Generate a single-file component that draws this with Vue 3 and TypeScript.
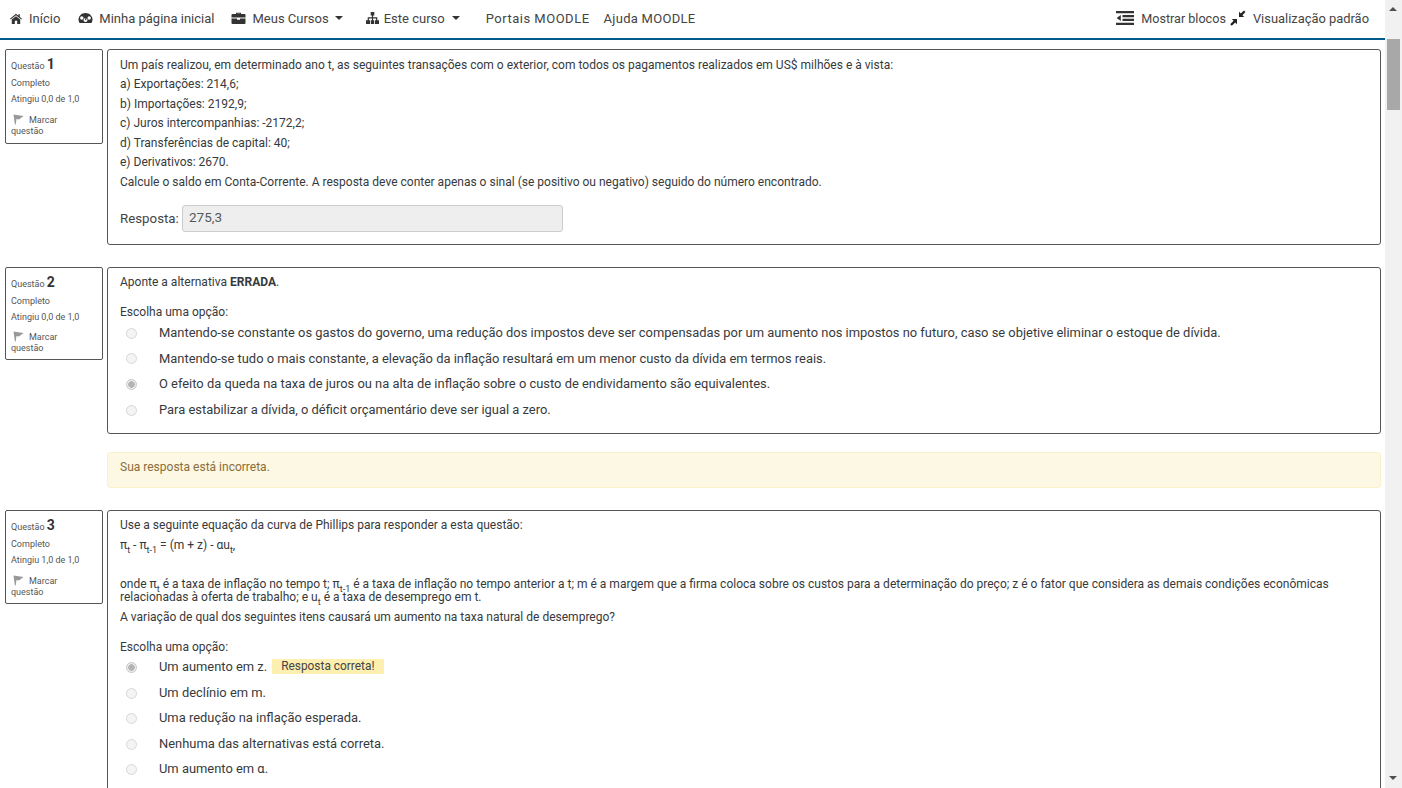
<script setup lang="ts">
interface Opt { text: string; checked?: boolean; tag?: string }
const q1Lines: string[] = [
  'Um país realizou, em determinado ano t, as seguintes transações com o exterior, com todos os pagamentos realizados em US$ milhões e à vista:',
  'a) Exportações: 214,6;',
  'b) Importações: 2192,9;',
  'c) Juros intercompanhias: -2172,2;',
  'd) Transferências de capital: 40;',
  'e) Derivativos: 2670.',
  'Calcule o saldo em Conta-Corrente. A resposta deve conter apenas o sinal (se positivo ou negativo) seguido do número encontrado.'
]
const q2Opts: Opt[] = [
  { text: 'Mantendo-se constante os gastos do governo, uma redução dos impostos deve ser compensadas por um aumento nos impostos no futuro, caso se objetive eliminar o estoque de dívida.' },
  { text: 'Mantendo-se tudo o mais constante, a elevação da inflação resultará em um menor custo da dívida em termos reais.' },
  { text: 'O efeito da queda na taxa de juros ou na alta de inflação sobre o custo de endividamento são equivalentes.', checked: true },
  { text: 'Para estabilizar a dívida, o déficit orçamentário deve ser igual a zero.' }
]
const q3Opts: Opt[] = [
  { text: 'Um aumento em z.', checked: true, tag: 'Resposta correta!' },
  { text: 'Um declínio em m.' },
  { text: 'Uma redução na inflação esperada.' },
  { text: 'Nenhuma das alternativas está correta.' },
  { text: 'Um aumento em α.' }
]
const infos = [
  { n: 1, grade: 'Atingiu 0,0 de 1,0' },
  { n: 2, grade: 'Atingiu 0,0 de 1,0' },
  { n: 3, grade: 'Atingiu 1,0 de 1,0' }
]
</script>

<template>
  <div class="window">
    <div class="page">
      <header class="nav">
        <div class="nav-left">
          <a class="item it-home">
            <svg class="ic" width="12" height="11" viewBox="0 0 12 11"><path d="M6 .8 0 5.800l.7.8L6 2.300l5.300 4.300.7-.8L9.800 4V1.200H8.400v1.600ZM6 3.200 1.800 6.600V11h3V7.800h2.400V11h3V6.600Z" fill="#333"/></svg>
            <span>Início</span>
          </a>
          <a class="item it-dash">
            <svg class="ic" width="15" height="12" viewBox="0 0 15 12"><path d="M7.500 1C3.600 1 .5 3.900.5 7.600c0 1.300.4 2.400 1 3.400h12c.6-1 1-2.100 1-3.400C14.500 3.900 11.400 1 7.500 1Z" fill="#333"/><circle cx="3.800" cy="6" r="1.700" fill="#fff"/><circle cx="11.200" cy="6" r="1.700" fill="#fff"/><circle cx="7.500" cy="8" r="2" fill="#fff"/><path d="M7.500 8 9 3" stroke="#333" stroke-width="1.200"/></svg>
            <span>Minha página inicial</span>
          </a>
          <a class="item it-courses">
            <svg class="ic" width="15" height="12" viewBox="0 0 14 12"><path d="M4.500 2V.8h5V2H13a1 1 0 0 1 1 1v2.600H0V3a1 1 0 0 1 1-1Zm1.200 0h2.600v-.2H5.700ZM0 6.500h5.500v1.300h3V6.500H14V11a1 1 0 0 1-1 1H1a1 1 0 0 1-1-1Z" fill="#333"/></svg>
            <span>Meus Cursos</span><i class="caret"></i>
          </a>
          <a class="item it-course">
            <svg class="ic" width="13" height="12" viewBox="0 0 13 12"><path d="M4.700 0h3.600v3.400H7.100v1.800h4.200v3h1.700V12H9V8.200h1.100V6.400H7.100v1.800h1.100V12H4.800V8.200h1.100V6.400H2.900v1.800H4V12H0V8.200h1.700v-3h4.200V3.400H4.700Z" fill="#333"/></svg>
            <span>Este curso</span><i class="caret"></i>
          </a>
          <a class="item it-plain">Portais MOODLE</a>
          <a class="item it-plain2">Ajuda MOODLE</a>
        </div>
        <div class="nav-right">
          <a class="item it-blocks">
            <svg class="ic" width="18" height="14" viewBox="0 0 18 14"><path d="M0 0h18v2.200H0ZM6.500 4h11.500v2.200H6.500ZM6.500 7.800h11.500V10H6.500ZM0 11.800h18V14H0ZM4.800 4v6L.6 7Z" fill="#333"/></svg>
            <span>Mostrar blocos</span>
          </a>
          <a class="item it-view">
            <svg class="ic" width="16" height="16" viewBox="0 0 16 16"><path d="M9 7V1.800l1.800 1.800L14 .6l1.400 1.400-3 3.200L14.200 7ZM7 9v5.200l-1.800-1.800L1.800 15.800.2 14.200l3.400-3.400L1.800 9Z" fill="#222"/></svg>
            <span>Visualização padrão</span>
          </a>
        </div>
      </header>

      <main class="content">
        <section class="question">
          <aside class="info">
            <div class="q-no">Questão <b>{{ infos[0].n }}</b></div>
            <div class="state">Completo</div>
            <div class="grade">{{ infos[0].grade }}</div>
            <div class="flag">
              <svg class="flag-ic" width="11" height="11" viewBox="0 0 11 11"><path d="M.5.500 10.500 2 6 5.500 3.500 5l-.8 5.500h-.8Z" fill="#999"/></svg>
              <span class="flag-t">Marcar</span><br>questão
            </div>
          </aside>
          <div class="card card-q1">
            <p v-for="l in q1Lines" :key="l" class="line">{{ l }}</p>
            <div class="answer">
              <label>Resposta:</label>
              <div class="input">275,3</div>
            </div>
          </div>
        </section>

        <section class="question q2">
          <aside class="info info2">
            <div class="q-no">Questão <b>{{ infos[1].n }}</b></div>
            <div class="state">Completo</div>
            <div class="grade">{{ infos[1].grade }}</div>
            <div class="flag">
              <svg class="flag-ic" width="11" height="11" viewBox="0 0 11 11"><path d="M.5.500 10.500 2 6 5.500 3.500 5l-.8 5.500h-.8Z" fill="#999"/></svg>
              <span class="flag-t">Marcar</span><br>questão
            </div>
          </aside>
          <div class="col">
            <div class="card card-q2">
              <p class="line">Aponte a alternativa <b>ERRADA</b>.</p>
              <p class="line choose">Escolha uma opção:</p>
              <div v-for="o in q2Opts" :key="o.text" class="opt">
                <i class="radio" :class="{ on: o.checked }"></i>
                <span>{{ o.text }}</span>
              </div>
            </div>
            <div class="feedback">Sua resposta está incorreta.</div>
          </div>
        </section>

        <section class="question q3">
          <aside class="info info3">
            <div class="q-no">Questão <b>{{ infos[2].n }}</b></div>
            <div class="state">Completo</div>
            <div class="grade">{{ infos[2].grade }}</div>
            <div class="flag">
              <svg class="flag-ic" width="11" height="11" viewBox="0 0 11 11"><path d="M.5.500 10.500 2 6 5.500 3.500 5l-.8 5.500h-.8Z" fill="#999"/></svg>
              <span class="flag-t">Marcar</span><br>questão
            </div>
          </aside>
          <div class="card card-q3">
            <p class="line">Use a seguinte equação da curva de Phillips para responder a esta questão:</p>
            <p class="line formula">π<sub>t</sub> - π<sub>t-1</sub> = (m + z) - αu<sub>t</sub>,</p>
            <p class="para">onde π<sub>t</sub> é a taxa de inflação no tempo t; π<sub>t-1</sub> é a taxa de inflação no tempo anterior a t; m é a margem que a firma coloca sobre os custos para a determinação do preço; z é o fator que considera as demais condições econômicas relacionadas à oferta de trabalho; e u<sub>t</sub> é a taxa de desemprego em t.</p>
            <p class="line after">A variação de qual dos seguintes itens causará um aumento na taxa natural de desemprego?</p>
            <p class="line choose">Escolha uma opção:</p>
            <div v-for="o in q3Opts" :key="o.text" class="opt">
              <i class="radio" :class="{ on: o.checked }"></i>
              <span>{{ o.text }}</span>
              <span v-if="o.tag" class="tag">{{ o.tag }}</span>
            </div>
          </div>
        </section>
      </main>
    </div>

    <div class="scrollbar">
      <i class="arrow up"></i>
      <div class="thumb"></div>
      <i class="arrow down"></i>
    </div>
  </div>
</template>

<style>
html, body { margin: 0; overflow: hidden; background: #fff; }
</style>

<style scoped>
.window { display: flex; width: 1402px; height: 788px; overflow: hidden; background: #fff; font-family: Roboto, "Liberation Sans", sans-serif; color: #373a3c; font-size: 12.030px; }
.page { width: 1385px; flex: none; overflow: hidden; }
.nav { height: 38px; border-bottom: 2px solid #005a8c; display: flex; justify-content: space-between; align-items: center; box-sizing: content-box; font-size: 13px; color: #444; }
.nav-left, .nav-right { display: flex; align-items: center; margin-top: -2px; }
.nav-right { padding-right: 16px; }
.item { display: flex; align-items: center; white-space: nowrap; }
.ic { flex: none; }
.it-home { margin-left: 10px; gap: 7px; }
.it-dash { margin-left: 18px; gap: 6px; }
.it-courses { margin-left: 17px; gap: 6px; }
.it-course { margin-left: 23px; gap: 5px; }
.it-plain { margin-left: 26px; letter-spacing: .5px; }
.it-plain2 { margin-left: 14px; letter-spacing: .28px; }
.it-blocks { gap: 7px; font-size: 12.600px; }
.it-view { margin-left: 4px; gap: 7px; font-size: 12.900px; }
.caret { width: 0; height: 0; border: 4px solid transparent; border-top-color: #333; border-bottom: 0; }
.it-course .caret { margin-left: 2px; }
.content { padding: 9px 4px 0 5px; }
.question { display: flex; align-items: flex-start; gap: 4px; }
.q2 { margin-top: 22px; }
.q3 { margin-top: 22px; }
.info { width: 98px; height: 95px; flex: none; box-sizing: border-box; border: 1px solid #555; border-radius: 2px; padding: 6px 5px 0 5px; font-size: 9px; color: #555; }
.info2 { height: 93px; }
.info3 { height: 94px; }
.q-no { height: 17px; line-height: 17px; }
.q-no b { font-size: 14px; font-weight: 700; color: #333; }
.state { margin-top: 4px; line-height: 13px; }
.grade { margin-top: 3px; line-height: 13px; }
.flag { margin-top: 8px; line-height: 11px; }
.info2 .flag { margin-top: 7px; }
.flag-ic { vertical-align: -2px; margin: 0 5px 0 2px; }
.col { flex: 1; min-width: 0; }
.card { flex: 1; box-sizing: border-box; border: 1px solid #555; border-radius: 3px; padding: 5.300px 12px 0; }
p { margin: 0; }
.line { line-height: 19.500px; }
.card-q1 { height: 196px; padding-top: 5.600px; }
.answer { display: flex; align-items: center; margin-top: 12.700px; font-size: 13.300px; }
.answer label { width: 62px; color: #444; }
.input { width: 381px; height: 27px; box-sizing: border-box; border: 1px solid #ccc; border-radius: 3px; background: #eee; padding: 0 6px; line-height: 23px; font-size: 13.500px; color: #55595c; }
.card-q2 { height: 167px; }
.choose { margin-top: 10px; }
.opt { display: flex; align-items: center; height: 25.600px; font-size: 12.910px; margin-top: -2.500px; margin-bottom: 2.500px; }
.radio { width: 11px; height: 11px; box-sizing: border-box; border-radius: 50%; border: 1px solid #d8d8d8; background: #f4f4f4; margin: 1.500px 22px 0 6px; flex: none; position: relative; }
.card-q3 .radio { margin-top: 2px; }
.radio.on { border-color: #c8c8c8; background: radial-gradient(circle, #b4b4b4 0 3px, #ececec 3.500px); }
.feedback { margin-top: 18px; height: 36px; box-sizing: border-box; border: 1px solid #faf2cc; border-radius: 3px; background: #fcf8e3; padding: 0 12px; line-height: 29px; color: #8a6d3b; }
.card-q3 { height: 400px; }
.formula { position: relative; }
sub { font-size: 9px; line-height: 0; vertical-align: -4px; }
.para { margin-top: 22.500px; line-height: 13.500px; }
.after { margin-top: 3px; }
.card-q3 .choose { margin-top: 11px; margin-bottom: -4.200px; }
.tag { background: #fcefb0; padding: 1px 9px; margin-left: 5px; font-size: 11.900px; line-height: 13px; color: #444; }
.scrollbar { width: 17px; flex: none; background: #f1f1f1; position: relative; display: flex; flex-direction: column; align-items: center; }
.thumb { position: absolute; top: 39px; left: 2px; right: 2px; height: 71px; background: #a8a8a8; }
.arrow { position: absolute; left: 4px; width: 0; height: 0; border-left: 4px solid transparent; border-right: 4px solid transparent; }
.arrow.up { top: 7px; border-bottom: 4px solid #505050; }
.arrow.down { bottom: 8px; border-top: 4px solid #505050; }
</style>
